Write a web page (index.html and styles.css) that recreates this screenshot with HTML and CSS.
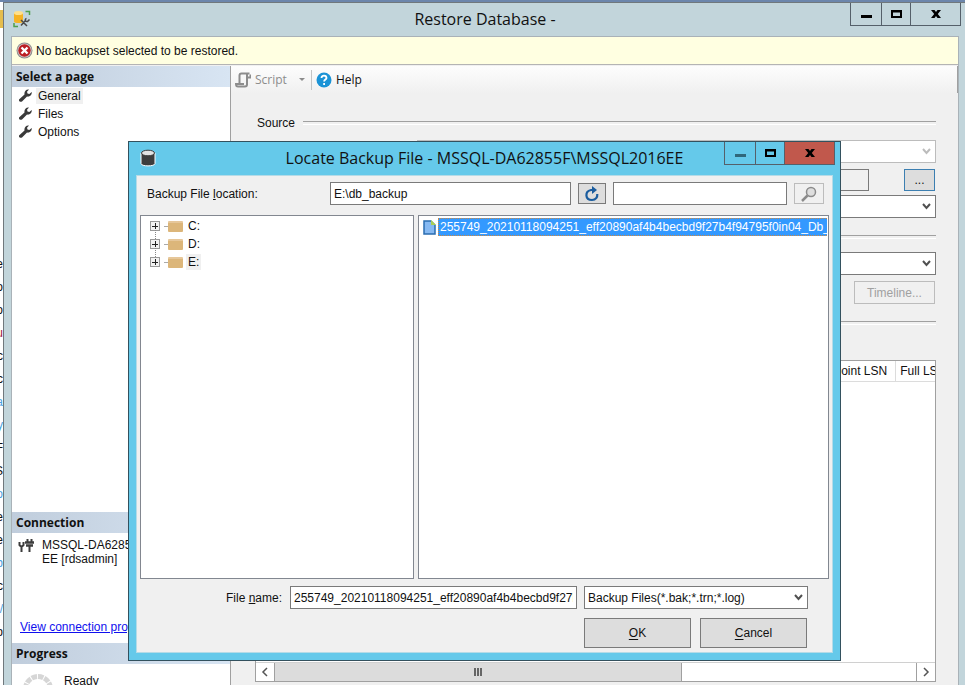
FILE: index.html
```
<!DOCTYPE html>
<html lang="en">
	<head>
		<meta charset="UTF-8" />
		<meta name="viewport" content="width=device-width, initial-scale=1.0" />
		<title>Restore Database</title>
		<link rel="stylesheet" href="styles.css">
	</head>
	<body>
		<div class="backdrop" aria-hidden="true">
			<div class="backdrop-folder"></div>
			<ul class="backdrop-list">
				<li>e</li><li>o</li><li>o</li><li class="red">u</li><li>c</li><li>c</li>
				<li class="blue">a</li><li class="blue">y</li><li>F</li><li>S</li><li class="blue">o</li>
				<li>e</li><li>e</li><li class="blue">b</li><li>c</li><li class="blue">/</li><li>p</li>
			</ul>
		</div>

		<main class="window">
			<header class="titlebar">
				<svg class="app-icon" width="18" height="18" viewBox="0 0 18 18" fill="none">
					<path d="M1 3v8.500c0 2 9 2 9 0V3z" fill="#f5b223" />
					<ellipse cx="5.500" cy="3" rx="4.500" ry="2" fill="#ffe08a" />
					<path d="M12.500 1.500H16.500V5M1 13v3.500h4" stroke="#4fa04b" stroke-width="1.500" />
					<path d="M8 15.500l4.500-5M8 10l6 6M13.500 8.500c-2 .5-1.500 3.500 1 3l2-2" stroke="#4a4a4a" stroke-width="1.500" />
				</svg>
				<h1>Restore Database -</h1>
				<div class="caption-buttons">
					<button type="button" aria-label="Minimize"><svg width="12" height="12"><path d="M1 7h11v3H1z" /></svg></button>
					<button type="button" class="maximize" aria-label="Maximize"><svg width="12" height="12"><path d="M1 2h11v8H1zM3 4.500v3.500h7V4.500z" fill-rule="evenodd" /></svg></button>
					<button type="button" class="close" aria-label="Close"><svg width="12" height="12"><path d="M1 2h3.500l1.500 2 1.500-2H11L7.800 6 11 10H7.500L6 8l-1.500 2H1l3.200-4z" /></svg></button>
				</div>
			</header>

			<div class="client">
				<p class="alert">
					<svg width="17" height="17" viewBox="0 0 17 17">
						<circle cx="8.500" cy="8.500" r="8" fill="#8c8c8c" />
						<circle cx="8.500" cy="8.500" r="7" fill="#d8d0d0" />
						<circle cx="8.500" cy="8.500" r="6.200" fill="#bb1f24" />
						<path d="M5.500 5.500l6 6M11.500 5.500l-6 6" stroke="#fff" stroke-width="2.400" />
					</svg>
					No backupset selected to be restored.
				</p>

				<div class="columns">
					<aside class="sidebar">
						<h2>Select a page</h2>
						<nav class="pages">
							<a href="#general" class="active"><svg class="wrench" width="13" height="13"><use href="#wrench" /></svg><span>General</span></a>
							<a href="#files"><svg class="wrench" width="13" height="13"><use href="#wrench" /></svg><span>Files</span></a>
							<a href="#options"><svg class="wrench" width="13" height="13"><use href="#wrench" /></svg><span>Options</span></a>
						</nav>

						<h2>Connection</h2>
						<div class="connection">
							<svg width="16" height="16" viewBox="0 0 16 16" fill="none" stroke="#3c3c3c">
								<path d="M1.500 4v3l2 2 2-2V4M3.500 9v5" stroke-width="2" />
								<path d="M9.500 1v3M13.500 1v3M11.500 8v6" stroke-width="2" />
								<path d="M7 4.500h9M8 7.500h7" stroke-width="2.400" />
							</svg>
							<p>MSSQL-DA62855F\MSSQL2016<br>EE [rdsadmin]</p>
						</div>
						<a class="view-link" href="#connection">View connection properties</a>

						<h2>Progress</h2>
						<div class="progress">
							<svg width="32" height="32" viewBox="0 0 32 32" fill="none">
								<circle cx="16" cy="16" r="12.500" stroke="#d6d6d6" stroke-width="5" stroke-dasharray="5.500 1" />
							</svg>
							<span>Ready</span>
						</div>
					</aside>

					<section class="content">
						<div class="toolbar">
							<button type="button" class="tool" disabled>
								<svg width="16" height="16" viewBox="0 0 16 16" fill="none" stroke="#8c8c8c" stroke-width="2">
									<path d="M4.500 11V3.500c0-1.500 1-2 2-2h8M12 2v10.500c0 1.500-1 2-2 2H3c-2 0-2-2.500-2-2.500h8" />
									<path d="M12.500 5.500h3v-3" />
								</svg>
								Script
								<span class="caret"></span>
							</button>
							<button type="button" class="tool help">
								<svg width="16" height="16" viewBox="0 0 16 16">
									<circle cx="8" cy="8" r="7.500" fill="#1b93d6" />
									<path d="M5.500 6c0-3.300 5-3 5 0 0 1.600-2.400 1.600-2.400 3.500M8.100 11v2" stroke="#fff" stroke-width="1.800" fill="none" />
								</svg>
								Help
							</button>
						</div>

						<form class="options">
							<h3 class="group">Source</h3>
							<div class="field first">
								<label for="srcDb">Database:</label>
								<select id="srcDb" disabled><option></option></select>
							</div>
							<div class="field">
								<label for="device">Device:</label>
								<div class="device">
									<input id="device" type="text" readonly>
									<button type="button" class="browse">...</button>
								</div>
							</div>
							<div class="field">
								<label for="deviceDb">Database:</label>
								<select id="deviceDb"><option></option></select>
							</div>

							<h3 class="group">Destination</h3>
							<div class="field">
								<label for="destDb">Database:</label>
								<select id="destDb"><option></option></select>
							</div>
							<div class="field">
								<span>Restore to:</span>
								<button type="button" class="timeline" disabled>Timeline...</button>
							</div>

							<h3 class="group">Restore plan</h3>
							<div class="plan">
								<div class="plan-table">
									<table>
										<thead>
											<tr><th class="wide">Restore</th><th class="wide">Name</th><th class="wide">Component</th><th>Checkpoint LSN</th><th>Full LSN</th></tr>
										</thead>
									</table>
								</div>
								<div class="scrollbar">
									<button type="button" aria-label="Scroll left"><svg width="8" height="10"><path d="M6 1L2 5l4 4" /></svg></button>
									<div class="track"><div class="thumb"><i></i><i></i><i></i></div></div>
									<button type="button" aria-label="Scroll right"><svg width="8" height="10"><path d="M2 1l4 4-4 4" /></svg></button>
								</div>
							</div>
						</form>
					</section>
				</div>
			</div>
		</main>

		<div class="dialog" role="dialog" aria-labelledby="dialogTitle">
			<header class="titlebar">
				<svg class="app-icon" width="16" height="18" viewBox="0 0 16 18">
					<path d="M1 4v10.500c0 3.200 14 3.200 14 0V4z" fill="#3d3d3d" stroke="#fff" />
					<ellipse cx="8" cy="4" rx="6.500" ry="2.800" fill="#e3e3e3" stroke="#3d3d3d" />
				</svg>
				<h1 id="dialogTitle">Locate Backup File - MSSQL-DA62855F\MSSQL2016EE</h1>
				<div class="caption-buttons">
					<button type="button" aria-label="Minimize"><svg width="12" height="12"><path d="M1 7h11v3H1z" fill="#30687b" /></svg></button>
					<button type="button" class="maximize" aria-label="Maximize"><svg width="12" height="12"><path d="M1 2h11v8H1zM3 4.500v3.500h7V4.500z" fill-rule="evenodd" /></svg></button>
					<button type="button" class="close" aria-label="Close"><svg width="12" height="12"><path d="M1 2h3.500l1.500 2 1.500-2H11L7.800 6 11 10H7.500L6 8l-1.500 2H1l3.200-4z" /></svg></button>
				</div>
			</header>

			<form class="dialog-body">
				<div class="location">
					<label for="location">Backup File <u>l</u>ocation:</label>
					<input id="location" type="text" value="E:\db_backup">
					<button type="button" class="refresh" aria-label="Refresh">
						<svg width="16" height="16" viewBox="0 0 16 16" fill="none">
							<path d="M9 4H7C.5 5.500 1 14 8 14c4 0 5.500-3 5.300-6" stroke="#1a5c9e" stroke-width="2.200" />
							<path d="M8 0l5 4-5 4z" fill="#1a5c9e" />
						</svg>
					</button>
					<input type="text" aria-label="Search">
					<button type="button" class="search" aria-label="Search" disabled>
						<svg width="18" height="16" viewBox="0 0 18 16" fill="none" stroke="#8b8b8b">
							<circle cx="11" cy="6" r="4.500" fill="#dedede" stroke-width="1.500" />
							<path d="M7.500 9.500L2 15" stroke-width="2.500" />
						</svg>
					</button>
				</div>

				<div class="panes">
					<ul class="tree">
						<li><button type="button" aria-label="Expand C:"></button><i class="folder"></i><span>C:</span></li>
						<li><button type="button" aria-label="Expand D:"></button><i class="folder"></i><span>D:</span></li>
						<li class="selected"><button type="button" aria-label="Expand E:"></button><i class="folder"></i><span>E:</span></li>
					</ul>
					<ul class="files">
						<li>
							<svg width="13" height="15" viewBox="0 0 13 15">
								<path d="M1 1h7.500L12 4.500V14H1z" fill="#86b9f2" stroke="#2a6cb0" stroke-width="1.500" />
								<path d="M8 0l5 5V0z" fill="#fff" />
								<path d="M8 0l5 5H8z" fill="#a9cf54" />
							</svg>
							<span>255749_20210118094251_eff20890af4b4becbd9f27b4f94795f0in04_Db_backup.bak</span>
						</li>
					</ul>
				</div>

				<div class="file-row">
					<label for="fileName">File <u>n</u>ame:</label>
					<input id="fileName" type="text" value="255749_20210118094251_eff20890af4b4becbd9f27b4f94795f0in04_Db_backup.bak">
					<select aria-label="File type"><option>Backup Files(*.bak;*.trn;*.log)</option></select>
				</div>
				<div class="actions">
					<button type="button"><u>O</u>K</button>
					<button type="button"><u>C</u>ancel</button>
				</div>
			</form>
		</div>

		<svg width="0" height="0" class="symbols">
			<symbol id="wrench" viewBox="0 0 13 13">
				<path d="M0 10.500L5.500 5.500C5 2.500 7 0 10 .5L8 2.800l.5 1.700 1.800.5L12.700 3c.6 3-2 5.200-4.700 4.600L3 12.500C1.500 13.500-.8 12 0 10.500z" fill="#3a3a3a" />
			</symbol>
		</svg>
	</body>
</html>
```
FILE: styles.css
```
:root {
	--frame: #c2d5db;
	--dialog-frame: #65c9ea;
	--face: #f0f0f0;
	--line: #a0a0a0;
	--dark-line: #7a7a7a;
	--ui-font: "Liberation Sans", Arial, sans-serif;
	--title-font: "Open Sans", "Segoe UI", sans-serif;
}

* {
	box-sizing: border-box;
	margin: 0;
	padding: 0;
}

body {
	font: 12px/16px var(--ui-font);
	color: #111;
	height: 100vh;
	overflow: hidden;
	display: flex;
	border-top: 2px solid #6c86ac;
}

ul {
	list-style: none;
}

button,
input,
select {
	font: inherit;
	color: inherit;
	border-radius: 0;
}

button {
	display: flex;
	align-items: center;
	justify-content: center;
	border: 1px solid var(--dark-line);
	background: #ddd;
}

input,
select {
	min-width: 0;
	height: 23px;
	padding: 0 3px;
	border: 1px solid var(--dark-line);
	background: white;
}

select {
	appearance: none;
	background: white url("data:image/svg+xml,%3Csvg xmlns='http://www.w3.org/2000/svg' width='9' height='7'%3E%3Cpath d='M1 1l3.500 4L8 1' fill='none' stroke='%23505050' stroke-width='2'/%3E%3C/svg%3E") no-repeat right 4px center;
}

select:disabled {
	opacity: 1;
	border-color: #bcbcbc;
	background-image: url("data:image/svg+xml,%3Csvg xmlns='http://www.w3.org/2000/svg' width='9' height='7'%3E%3Cpath d='M1 1l3.500 4L8 1' fill='none' stroke='%23bcbcbc' stroke-width='2'/%3E%3C/svg%3E");
}

.symbols {
	position: absolute;
}

/* Window behind everything, only its edge is visible */
.backdrop {
	width: 3px;
	overflow: hidden;
	background: white;
}

.backdrop-folder {
	height: 18px;
	margin: 8px 0 225px;
	background: #e5bd4c;
}

.backdrop-list {
	display: flex;
	flex-direction: column;
	align-items: flex-end;
	line-height: 23px;
}

.backdrop-list .blue {
	color: #4a9fe0;
}

.backdrop-list .red {
	color: #a02040;
}

/* Window chrome */
.window {
	flex: 1;
	min-width: 0;
	display: flex;
	flex-direction: column;
	padding: 0 6px 0 7px;
	border: solid #70787c;
	border-width: 1px 0 0 1px;
	background: var(--frame);
}

.titlebar {
	height: 33px;
	display: grid;
	grid-template-columns: 1fr auto 1fr;
}

.titlebar h1 {
	font: 16px/32px var(--title-font);
	white-space: nowrap;
}

.app-icon {
	margin: 7px 2px;
}

.caption-buttons {
	display: flex;
	justify-self: end;
	height: 23px;
	margin-right: -2px;
}

.caption-buttons button {
	width: 31px;
	border: 1px solid #55606a;
	border-top: 0;
	border-right: 0;
	background: none;
}

.caption-buttons .maximize {
	width: 29px;
}

.caption-buttons .close {
	width: 51px;
	border-right: 1px solid #55606a;
}

.client {
	flex: 1;
	min-height: 0;
	display: flex;
	flex-direction: column;
	border: 1px solid #a9b2b8;
	border-bottom: 0;
	background: var(--face);
}

.alert {
	display: flex;
	align-items: center;
	gap: 3px;
	height: 28px;
	padding-left: 4px;
	background: #ffffe1;
	border-bottom: 1px solid #b4b4b4;
}

.columns {
	flex: 1;
	min-height: 0;
	display: grid;
	grid-template-columns: 219px minmax(0, 1fr);
	padding-top: 1px;
}

/* Sidebar */
.sidebar {
	display: flex;
	flex-direction: column;
	min-height: 0;
	background: white;
	border-right: 1px solid var(--line);
}

.sidebar h2 {
	font: bold 12px/21px var(--title-font);
	padding-left: 4px;
	background: linear-gradient(to right, #c0cddc, #d8e5f3);
}

.pages {
	flex: 1;
}

.pages a {
	display: flex;
	align-items: center;
	gap: 4px;
	height: 17px;
	padding-left: 7px;
	color: inherit;
	text-decoration: none;
}

.pages a + a {
	margin-top: 1px;
}

.pages span {
	padding: 0 2px;
}

.pages .active span {
	background: var(--face);
}

.connection {
	display: flex;
	gap: 8px;
	height: 86px;
	padding: 5px 6px;
	line-height: 14px;
}

.view-link {
	height: 24px;
	padding-left: 8px;
	color: #1010ee;
}

.progress {
	display: flex;
	gap: 10px;
	height: 21px;
	padding: 9px 10px 0;
	overflow: hidden;
}

/* Right side */
.content {
	display: flex;
	flex-direction: column;
	min-height: 0;
}

.toolbar {
	display: flex;
	align-items: center;
	height: 27px;
	background: linear-gradient(#fdfdfd, #f0f0f0);
	border-right: 1px solid var(--line);
	font-family: var(--title-font);
}

.tool {
	gap: 4px;
	height: 20px;
	padding: 0 6px 0 4px;
	border: 0;
	background: none;
}

.tool:disabled {
	color: #8c8c8c;
}

.help {
	border-left: 1px solid #c4c4c4;
	color: #111;
}

.caret {
	margin-left: 8px;
	border: 3px solid transparent;
	border-top-color: #8c8c8c;
	border-bottom: 0;
}

.options {
	flex: 1;
	min-height: 0;
	display: flex;
	flex-direction: column;
	padding: 22px 22px 0 24px;
}

.group {
	display: flex;
	align-items: center;
	gap: 8px;
	padding-left: 2px;
	font: 12px/16px var(--ui-font);
}

.group::after {
	content: "";
	flex: 1;
	height: 2px;
	border-top: 1px solid var(--line);
	border-bottom: 1px solid white;
}

.field {
	display: grid;
	grid-template-columns: 162px minmax(0, 1fr);
	align-items: center;
	margin-bottom: 4px;
}

.field.first {
	margin: 9px 0 6px;
}

.field + .group {
	margin: 7px 0;
}

.device {
	display: flex;
	justify-content: space-between;
	height: 22px;
}

.device input {
	flex: 1;
	height: 22px;
	background: var(--face);
}

.browse {
	width: 31px;
	margin: 0 1px 0 35px;
	border-color: #3c7fb1;
}

.timeline {
	justify-self: end;
	width: 81px;
	height: 23px;
	margin: 2px 1px 0 0;
	border-color: #bcbcbc;
	background: var(--face);
	color: #a0a0a0;
}

.plan {
	flex: 1;
	min-height: 0;
	display: flex;
	flex-direction: column;
	margin: 22px 0 3px;
	border: 1px solid var(--line);
	background: white;
}

.plan-table {
	flex: 1;
	overflow: hidden;
}

.plan-table table {
	width: 740px;
	table-layout: fixed;
	border-collapse: collapse;
}

.plan-table th {
	height: 20px;
	padding-left: 4px;
	border-right: 1px solid #dcdcdc;
	border-bottom: 1px solid #dcdcdc;
	font-weight: normal;
	text-align: left;
}

.plan-table .wide {
	width: 180px;
}

.scrollbar {
	display: flex;
	height: 19px;
	border-top: 1px solid #d0d0d0;
}

.scrollbar button {
	width: 18px;
	border: 0;
	background: white;
}

.scrollbar path {
	fill: none;
	stroke: #555;
	stroke-width: 1.5;
}

.track {
	flex: 1;
	border: solid var(--line);
	border-width: 0 1px;
}

.thumb {
	display: flex;
	align-items: center;
	justify-content: center;
	gap: 1px;
	width: 63.5%;
	height: 100%;
	border-right: 1px solid var(--line);
	background: #dcdcdc;
}

.thumb i {
	width: 2px;
	height: 8px;
	background: #666;
}

/* Locate Backup File window */
.dialog {
	position: absolute;
	left: 128px;
	top: 141px;
	width: 713px;
	padding: 0 7px 7px;
	border: 1px solid #33515e;
	background: var(--dialog-frame);
}

.dialog .app-icon {
	margin-left: 4px;
}

.dialog .close {
	background: #c1584c;
}

.dialog-body {
	padding: 6px 3px 4px;
	border: 1px solid #b5dbe7;
	background: var(--face);
}

.location {
	display: grid;
	grid-template-columns: 176px 241px 28px 174px 30px;
	align-items: center;
	column-gap: 7px;
	padding-left: 7px;
	margin-bottom: 10px;
}

.location button {
	height: 21px;
}

.location .search {
	border-color: #bcbcbc;
	background: var(--face);
}

.panes {
	display: grid;
	grid-template-columns: 274px minmax(0, 1fr);
	gap: 4px;
	height: 364px;
}

.tree,
.files {
	border: 1px solid #828790;
	background: white;
}

.tree {
	padding: 1px 9px;
}

.tree li {
	display: flex;
	align-items: center;
	height: 18px;
}

.tree li + li button::before {
	content: "";
	position: absolute;
	left: 4px;
	top: -10px;
	height: 9px;
	border-left: 1px dotted #888;
}

.tree button {
	position: relative;
	width: 10px;
	height: 10px;
	border-color: #999;
	background:
		linear-gradient(#222, #222) center / 6px 1px no-repeat,
		linear-gradient(#222, #222) center / 1px 6px no-repeat,
		#f2f2f2;
}

.folder {
	width: 15px;
	height: 11px;
	margin-left: 8px;
	border-top: 2px solid #e6c79a;
	border-radius: 1px;
	background: #dcb67a;
	box-shadow: -9px 0 0 -5px #aaa;
}

.tree span {
	margin-left: 3px;
	padding: 0 2px;
}

.tree .selected span {
	background: var(--face);
}

.files {
	padding: 2px 1px 0 4px;
	overflow: hidden;
}

.files li {
	display: flex;
	align-items: center;
	gap: 2px;
}

.files svg {
	flex: none;
}

.files span {
	flex: 1;
	padding-left: 1px;
	border: 1px dotted #cc8844;
	border-right: 0;
	background: #3399ff;
	color: white;
	white-space: nowrap;
	overflow: hidden;
}

.file-row {
	display: grid;
	grid-template-columns: 57px 287px 224px;
	align-items: center;
	justify-content: end;
	gap: 7px;
	margin: 7px 21px 9px 0;
}

.actions {
	display: flex;
	justify-content: flex-end;
	gap: 9px;
	margin-right: 22px;
}

.actions button {
	width: 107px;
	height: 30px;
}

.actions u {
	text-underline-offset: 2px;
}
```
